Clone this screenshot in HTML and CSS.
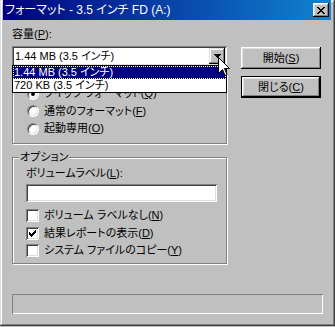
FILE: index.html
```html
<!DOCTYPE html>
<html lang="ja">
<head>
<meta charset="utf-8">
<link rel="stylesheet" href="styles.css">
</head>
<body>
<div class="window">
  <div class="titlebar">
    <span class="title">フォーマット - 3.5 インチ FD (A:)</span>
    <span class="close"><svg width="8" height="7" viewBox="0 0 8 7"><path d="M0 0h2v1h1v1h2V1h1V0h2v1H7v1H6v1H5v1h1v1h1v1h1v1H6V6H5V5H3v1H2v1H0V6h1V5h1V4h1V3H2V2H1V1H0z" fill="#000"/></svg></span>
  </div>
  <div class="content">
    <div class="main">
      <div class="left">
        <div class="label">容量(<u>P</u>):</div>
        <div class="combo">
          <span class="combo-text">1.44 MB (3.5 インチ)</span>
          <span class="dropbtn"><svg width="7" height="4" viewBox="0 0 7 4"><path d="M0 0h7v1H6v1H5v1H4v1H3V3H2V2H1V1H0z" fill="#000"/></svg></span>
        </div>
        <div class="group g1">
          <span class="legend">フォーマットの種類</span>
          <div class="radio-row"><span class="radio checked"></span><span>クイック フォーマット(<u>Q</u>)</span></div>
          <div class="radio-row"><span class="radio"></span><span>通常のフォーマット(<u>F</u>)</span></div>
          <div class="radio-row"><span class="radio"></span><span>起動専用(<u>O</u>)</span></div>
        </div>
        <div class="group g2">
          <span class="legend">オプション</span>
          <div class="label inner">ボリュームラベル(<u>L</u>):</div>
          <div class="textbox"></div>
          <div class="check-row"><span class="check"></span><span>ボリューム ラベルなし(<u>N</u>)</span></div>
          <div class="check-row"><span class="check"><svg width="7" height="7" viewBox="0 0 7 7"><path d="M6 0h1v3H6v1H5v1H4v1H3v1H2V6H1V5H0V2h1v1h1v1h1V3h1V2h1V1h1z" fill="#000"/></svg></span><span>結果レポートの表示(<u>D</u>)</span></div>
          <div class="check-row"><span class="check"></span><span>システム ファイルのコピー(<u>Y</u>)</span></div>
        </div>
      </div>
      <div class="right">
        <div class="btn">開始(<u>S</u>)</div>
        <div class="btn default">閉じる(<u>C</u>)</div>
      </div>
    </div>
    <div class="progress"></div>
  </div>
  <div class="droplist">
    <div class="item sel">1.44 MB (3.5 インチ)</div>
    <div class="item">720 KB (3.5 インチ)</div>
  </div>
  <svg class="cursor" width="12" height="20" viewBox="0 0 12 20"><path d="M0.5 0.5V16.5L4.5 12.5L7 18.5L9 17.5L6.5 11.5H11.5Z" fill="#fff" stroke="#000" stroke-width="1"/></svg>
</div>
</body>
</html>
```
FILE: styles.css
```css
* { box-sizing: border-box; }
html, body { margin: 0; padding: 0; }
body {
  width: 335px;
  height: 327px;
  overflow: hidden;
  background: #c0c0c0;
  font-family: "Liberation Sans", "Noto Sans CJK JP", sans-serif;
  font-size: 11px;
  line-height: 13px;
  font-feature-settings: "palt";
  color: #000;
}
u { text-decoration: underline; text-underline-offset: 1px; }
.window {
  position: relative;
  width: 335px;
  height: 326px;
  background: #c0c0c0;
  padding: 0 4px 4px 3px;
  box-shadow: inset -1px -1px #404040, inset 1px 1px #dfdfdf, inset -2px -2px #808080, inset 2px 2px #fff;
}
.titlebar {
  height: 20px;
  background: linear-gradient(to right, #000080, #1084d0);
  display: flex;
  align-items: center;
  justify-content: space-between;
  padding: 0 2px 0 2px;
}
.title {
  color: #fff;
  font-size: 12px;
}
.close {
  width: 16px;
  height: 14px;
  background: #c0c0c0;
  display: flex;
  align-items: center;
  justify-content: center;
  box-shadow: inset -1px -1px #000, inset 1px 1px #fff, inset -2px -2px #808080, inset 2px 2px #dfdfdf;
}
.content {
  padding: 8px 9px 0 9px;
}
.main {
  display: flex;
  gap: 14px;
}
.left { width: 215px; }
.label { height: 13px; }
.combo {
  margin-top: 5px;
  height: 20px;
  background: #fff;
  box-shadow: inset 1px 1px #808080, inset -1px -1px #fff, inset 2px 2px #404040, inset -2px -2px #dfdfdf;
  display: flex;
  align-items: center;
  justify-content: space-between;
  padding: 2px;
}
.combo-text { padding-left: 1px; }
.dropbtn {
  width: 16px;
  height: 16px;
  background: #c0c0c0;
  display: flex;
  align-items: center;
  justify-content: center;
  box-shadow: inset -1px -1px #000, inset 1px 1px #dfdfdf, inset -2px -2px #808080, inset 2px 2px #fff;
}
.group {
  border: 1px solid #808080;
  box-shadow: inset 1px 1px #fff, 1px 1px #fff;
  padding: 0 9px 0 14px;
}
.legend {
  display: block;
  width: max-content;
  height: 13px;
  background: #c0c0c0;
  margin: -7px 0 0 -7px;
  padding: 0 1px;
}
.g1 { margin-top: 8px; height: 70px; }
.g1 .legend { margin-bottom: 4px; }
.radio-row, .check-row {
  display: flex;
  align-items: center;
  gap: 5px;
  height: 17.5px;
}
.radio {
  width: 12px;
  height: 12px;
  border-radius: 50%;
  background: #fff;
  border: 1px solid;
  border-color: #808080 #fff #fff #808080;
  box-shadow: inset 1px 1px #404040, inset -1px -1px #dfdfdf;
  position: relative;
  flex: none;
}
.radio.checked::after {
  content: "";
  position: absolute;
  left: 3px; top: 3px;
  width: 4px; height: 4px;
  border-radius: 50%;
  background: #000;
}
.g2 { margin-top: 13px; height: 107px; padding-left: 13px; }
.inner { margin-top: 3px; }
.textbox {
  margin-top: 4px;
  width: 191px;
  height: 18px;
  background: #fff;
  box-shadow: inset 1px 1px #808080, inset -1px -1px #fff, inset 2px 2px #404040, inset -2px -2px #dfdfdf;
  margin-bottom: 5px;
}
.check {
  width: 13px;
  height: 13px;
  background: #fff;
  box-shadow: inset 1px 1px #808080, inset -1px -1px #fff, inset 2px 2px #404040, inset -2px -2px #dfdfdf;
  display: flex;
  align-items: center;
  justify-content: center;
  flex: none;
}
.right {
  display: flex;
  flex-direction: column;
  gap: 7px;
  padding-top: 19px;
}
.btn {
  width: 80px;
  height: 22px;
  display: flex;
  align-items: center;
  justify-content: center;
  box-shadow: inset -1px -1px #000, inset 1px 1px #fff, inset -2px -2px #808080, inset 2px 2px #dfdfdf;
}
.btn.default {
  box-shadow: inset 0 0 0 1px #000, inset -2px -2px #000, inset 2px 2px #fff, inset -3px -3px #808080, inset 3px 3px #dfdfdf;
}
.progress {
  margin-top: 30px;
  width: 311px;
  height: 20px;
  box-shadow: inset 1px 1px #808080, inset -1px -1px #fff;
}
.droplist {
  position: absolute;
  left: 12px;
  top: 65px;
  width: 215px;
  background: #fff;
  border: 1px solid #000;
}
.item {
  height: 13px;
  line-height: 13px;
  padding-left: 1px;
}
.item.sel {
  background: #000080;
  color: #fff;
  outline: 1px dotted #ffffa0;
  outline-offset: -1px;
}
.cursor {
  position: absolute;
  left: 218px;
  top: 57px;
}
```
